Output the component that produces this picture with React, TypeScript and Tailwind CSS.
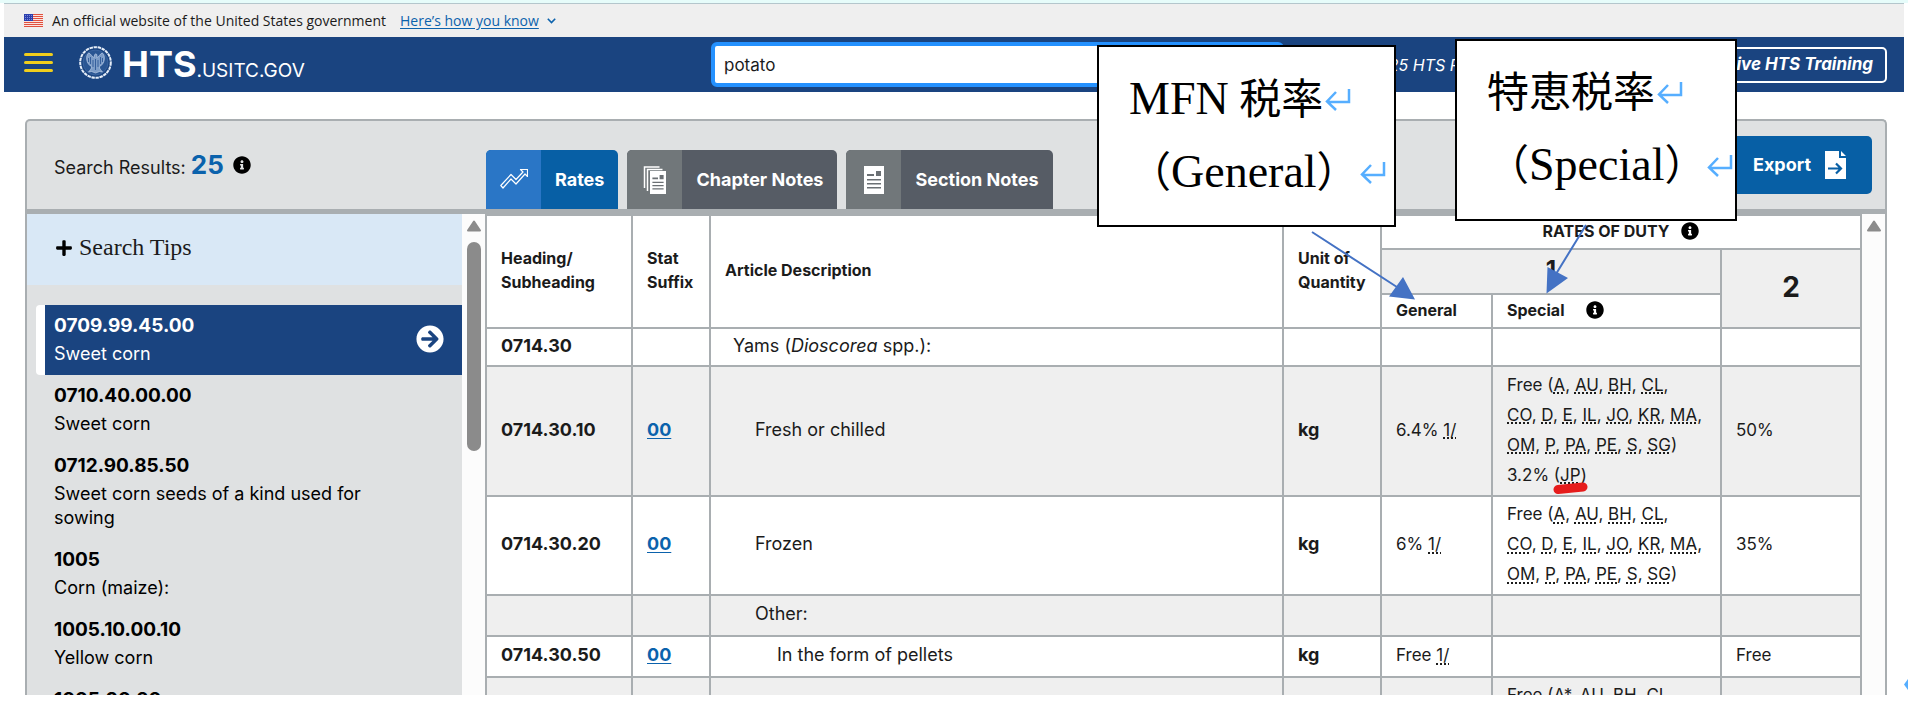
import type { ReactNode } from 'react';
import { FaArrowCircleRight, FaInfoCircle, FaPlus } from 'react-icons/fa';

interface SearchResult {
  code: string;
  description?: string;
}

interface RateRow {
  heading?: string;
  suffix?: string;
  description?: ReactNode;
  indent?: string;
  unit?: string;
  general?: string;
  note?: boolean;
  special?: ReactNode;
  column2?: string;
  height: string;
}

const results: SearchResult[] = [
  { code: '0709.99.45.00', description: 'Sweet corn' },
  { code: '0710.40.00.00', description: 'Sweet corn' },
  { code: '0712.90.85.50', description: 'Sweet corn seeds of a kind used for sowing' },
  { code: '1005', description: 'Corn (maize):' },
  { code: '1005.10.00.10', description: 'Yellow corn' },
  { code: '1005.90.20' },
];

const programLines = [
  ['A', 'AU', 'BH', 'CL'],
  ['CO', 'D', 'E', 'IL', 'JO', 'KR', 'MA'],
  ['OM', 'P', 'PA', 'PE', 'S', 'SG'],
];

function Abbr({ children }: { children: ReactNode }) {
  return (
    <abbr className="underline decoration-dotted decoration-2 underline-offset-2 [text-decoration-skip-ink:none]">
      {children}
    </abbr>
  );
}

function Programs({ lines, open = false }: { lines: string[][]; open?: boolean }) {
  return (
    <>
      {lines.map((line, i) => (
        <div key={i} className="whitespace-nowrap">
          {i === 0 && 'Free ('}
          {line.map((code, j) => (
            <span key={code}>
              <Abbr>{code}</Abbr>
              {!open && i === lines.length - 1 && j === line.length - 1 ? ')' : ', '}
            </span>
          ))}
        </div>
      ))}
    </>
  );
}

const rows: RateRow[] = [
  {
    heading: '0714.30',
    description: (
      <>
        Yams (<i>Dioscorea</i> spp.):
      </>
    ),
    indent: 'pl-[22px]',
    height: 'h-[38px]',
  },
  {
    heading: '0714.30.10',
    suffix: '00',
    description: 'Fresh or chilled',
    indent: 'pl-11',
    unit: 'kg',
    general: '6.4%',
    note: true,
    special: (
      <>
        <Programs lines={programLines} />
        <div>
          3.2% (
          <span className="relative">
            <Abbr>JP</Abbr>
            <svg className="absolute -left-2 top-[17px] h-3 w-9" viewBox="0 0 36 12" aria-hidden="true">
              <path d="M6 7.500 L31 5" stroke="#e61c1c" strokeWidth="9" strokeLinecap="round" />
            </svg>
          </span>
          )
        </div>
      </>
    ),
    column2: '50%',
    height: 'h-[130px]',
  },
  {
    heading: '0714.30.20',
    suffix: '00',
    description: 'Frozen',
    indent: 'pl-11',
    unit: 'kg',
    general: '6%',
    note: true,
    special: <Programs lines={programLines} />,
    column2: '35%',
    height: 'h-[99px]',
  },
  { description: 'Other:', indent: 'pl-11', height: 'h-[41px]' },
  {
    heading: '0714.30.50',
    suffix: '00',
    description: 'In the form of pellets',
    indent: 'pl-[66px]',
    unit: 'kg',
    general: 'Free',
    note: true,
    column2: 'Free',
    height: 'h-[41px]',
  },
  { special: <Programs open lines={[['A*', 'AU', 'BH', 'CL']]} />, height: 'h-[38px]' },
];

function Flag() {
  return (
    <svg className="h-[13px] w-[19px]" viewBox="0 0 19 13" aria-hidden="true">
      <rect width="19" height="13" fill="#fbe3df" />
      {[0, 2, 4, 6, 8, 10, 12].map(y => (
        <rect key={y} y={y} width="19" height="1" fill="#e0513f" />
      ))}
      <rect width="9" height="7" fill="#2a3fae" />
      {[1, 3, 5].map(y => (
        <path key={y} d={`M1 ${y + 0.5}h7`} stroke="#8f9ce0" strokeWidth="0.8" strokeDasharray="1 1" />
      ))}
    </svg>
  );
}

function Seal() {
  return (
    <svg className="h-[33px] w-[33px]" viewBox="0 0 33 33" fill="none" aria-hidden="true">
      <circle cx="16.5" cy="16.5" r="15.3" stroke="#e6eef8" strokeWidth="2" strokeDasharray="3.400 0.700" />
      <circle cx="16.5" cy="16.5" r="12.500" fill="#2a5693" stroke="#5079b2" strokeWidth="0.500" />
      <path
        d="M15.500 9c.5-1.500 2-1.500 2.500 0l-.3 2.500c2 0 3-3.500 5.500-4.500 2 1.500 2.500 4 2 7-.5 2.500-1.500 4-3 5.500l-2 1 .8 2.500 2.500 3-3-.5-4 1.500-4-1.500-3 .5 2.500-3 .8-2.500-2-1c-1.500-1.500-2.500-3-3-5.500-.5-3 0-5.500 2-7 2.500 1 3.500 4.500 5.500 4.500z"
        fill="#7d9dc8"
        stroke="#c9d9ee"
        strokeWidth="0.600"
      />
      <path
        d="M14 14v7M16.500 13v11M19 14v7M11.500 11v7M21.500 11v7M9.500 12v4M23.500 12v4"
        stroke="#2c5896"
        strokeWidth="0.900"
      />
    </svg>
  );
}

function TrendIcon() {
  return (
    <svg className="h-6 w-7" viewBox="0 0 28 24" fill="none" stroke="#fff" strokeWidth="1.200" aria-hidden="true">
      <path
        d="M3 20 .8 17.500 11 6.500 16 11.500 23 4 20.500 1.500H27.500V8.500L25 6 16 16 11 11z"
        strokeLinejoin="round"
      />
    </svg>
  );
}

function PageIcon({ stacked = false }: { stacked?: boolean }) {
  return (
    <svg className="h-7 w-6" viewBox="0 0 24 28" aria-hidden="true">
      {stacked && <path d="M1.500 22V1h15M4.500 25V3.500h15" fill="none" stroke="#fff" strokeWidth="1.500" />}
      <g transform={stacked ? 'translate(7 5) scale(.8 .82)' : 'translate(2 0)'}>
        <path d="M0 0h20v28H0z" fill="#fff" />
        <path d="M12 5h5v5h-5zM3 8h7v2H3zM3 13h14v1.500H3zM3 17h14v1.500H3zM3 21h14v1.500H3z" fill="#6b7074" />
      </g>
    </svg>
  );
}

function ReturnMark() {
  return (
    <svg className="h-[22px] w-[26px] shrink-0" viewBox="0 0 26 22" fill="none" stroke="#56aeff" strokeWidth="2.500" aria-hidden="true">
      <path d="M24 0v13H2M11 3 2 12.500 11 21" />
    </svg>
  );
}

function ScrollArrow() {
  return (
    <svg className="h-3 w-4" viewBox="0 0 16 12" aria-hidden="true">
      <path d="M8 1.500 14 10.500H2z" fill="#8b8b8b" stroke="#8b8b8b" strokeWidth="2" strokeLinejoin="round" />
    </svg>
  );
}

function Tab({ icon, label, active = false }: { icon: ReactNode; label: string; active?: boolean }) {
  return (
    <button
      role="tab"
      aria-selected={active}
      className={`flex h-[59px] items-stretch overflow-hidden rounded-t-[5px] text-lg font-bold text-white ${active ? 'bg-[#075fa5]' : 'bg-[#565c65]'}`}
    >
      <span className={`flex w-[55px] items-center justify-center ${active ? 'bg-[#2a76c6]' : 'bg-[#71777a]'}`}>{icon}</span>
      <span className="flex items-center px-[14px]">{label}</span>
    </button>
  );
}

function Callout({ title, term, place }: { title: ReactNode; term: string; place: string }) {
  return (
    <div
      className={`absolute h-[182px] border-2 border-black bg-white pl-[30px] pt-4 font-['Liberation_Serif','Noto_Sans_CJK_JP',serif] text-[42px] leading-[72px] text-black ${place}`}
    >
      <div className="flex items-center gap-[2px] whitespace-nowrap">
        <span>{title}</span>
        <ReturnMark />
      </div>
      <div className="flex items-center gap-px whitespace-nowrap">
        <span>
          （<span className="text-[46px]">{term}</span>）
        </span>
        <ReturnMark />
      </div>
    </div>
  );
}

function RatesTable() {
  const cell = 'border-2 border-[#a9aeb1] px-[14px] pb-[3px]';
  return (
    <table className="w-full table-fixed border-collapse bg-white text-left text-lg text-[#1b1b1b]">
      <colgroup>
        <col className="w-[146px]" />
        <col className="w-[78px]" />
        <col />
        <col className="w-[98px]" />
        <col className="w-[111px]" />
        <col className="w-[229px]" />
        <col className="w-[140px]" />
      </colgroup>
      <thead className="text-base leading-6 font-bold">
        <tr className="h-[34px]">
          <th rowSpan={3} className={cell}>
            Heading/
            <br />
            Subheading
          </th>
          <th rowSpan={3} className={cell}>
            Stat
            <br />
            Suffix
          </th>
          <th rowSpan={3} className={cell}>
            Article Description
          </th>
          <th rowSpan={3} className={cell}>
            Unit of
            <br />
            Quantity
          </th>
          <th colSpan={3} className={cell}>
            <span className="flex items-center justify-center gap-3">
              RATES OF DUTY <FaInfoCircle className="h-[18px] w-[18px] text-black" />
            </span>
          </th>
        </tr>
        <tr className="h-[45px]">
          <th colSpan={2} className={`${cell} bg-[#efefef] text-center text-2xl leading-6`}>
            1
          </th>
          <th rowSpan={2} className={`${cell} bg-[#efefef] text-center text-[28px]`}>
            2
          </th>
        </tr>
        <tr className="h-[34px]">
          <th className={cell}>General</th>
          <th className={cell}>
            <span className="flex items-center gap-[22px]">
              Special <FaInfoCircle className="h-[18px] w-[18px] text-black" />
            </span>
          </th>
        </tr>
      </thead>
      <tbody className="leading-[30px]">
        {rows.map((row, i) => (
          <tr key={i} className={`${row.height} ${i % 2 ? 'bg-[#efefef]' : 'bg-white'}`}>
            <td className={`${cell} font-bold`}>{row.heading}</td>
            <td className={`${cell} font-bold`}>
              {row.suffix && (
                <a href="#" className="text-[#0b62ac] underline underline-offset-2">
                  {row.suffix}
                </a>
              )}
            </td>
            <td className="border-2 border-[#a9aeb1] pb-[3px]">
              <div className={row.indent}>{row.description}</div>
            </td>
            <td className={`${cell} font-bold`}>{row.unit}</td>
            <td className={`${cell} text-[17px]`}>
              {row.general} {row.note && <Abbr>1/</Abbr>}
            </td>
            <td className={`${cell} text-[17px]`}>{row.special}</td>
            <td className={`${cell} text-[17px]`}>{row.column2}</td>
          </tr>
        ))}
      </tbody>
    </table>
  );
}

export default function App() {
  return (
    <div className="relative h-screen overflow-hidden bg-white pb-[7px] font-['Inter',sans-serif] text-[#1b1b1b]">
      <div className="flex h-full flex-col overflow-hidden">
        <div className="h-[3px] shrink-0 bg-[#e6fcfa]" />
        <div className="mx-1 flex h-[34px] shrink-0 items-center border-t border-[#b4c6cc] bg-[#efefef] pl-5 font-['Open_Sans',sans-serif] text-sm">
          <Flag />
          <span className="ml-[9px]">An official website of the United States government</span>
          <a href="#" className="ml-[14px] flex items-center gap-2 text-[#0b62ac]">
            <span className="underline underline-offset-2">Here’s how you know</span>
            <svg className="h-[6px] w-[9px]" viewBox="0 0 9 6" fill="none" stroke="currentColor" strokeWidth="1.600" aria-hidden="true">
              <path d="M.8.8 4.500 4.500 8.200.8" />
            </svg>
          </a>
        </div>

        <header className="mx-1 flex h-[55px] shrink-0 items-center bg-[#1a4480] pr-[17px] pl-5 text-white">
          <button aria-label="Menu" className="flex w-[29px] flex-col gap-[5px] pb-1">
            <span className="h-[3px] w-full rounded-sm bg-[#f0ce1c]" />
            <span className="h-[3px] w-full rounded-sm bg-[#f0ce1c]" />
            <span className="h-[3px] w-full rounded-sm bg-[#f0ce1c]" />
          </button>
          <a href="#" className="ml-[26px] flex items-center gap-[10px]">
            <span className="pb-1">
              <Seal />
            </span>
            <span className="whitespace-nowrap text-[19px]">
              <b className="text-4xl">HTS</b>.USITC.GOV
            </span>
          </a>
          <input
            aria-label="Search"
            defaultValue="potato"
            className="ml-auto h-[45px] w-[573px] rounded-md border-4 border-[#2491ff] bg-white px-[9px] text-[17px] text-[#1b1b1b] outline-none"
          />
          <span className="ml-[85px] w-[278px] shrink-0 text-base whitespace-nowrap italic">2025 HTS Revision</span>
          <a href="#" className="flex h-9 w-[240px] shrink-0 items-center justify-end rounded-[5px] border-2 border-white pr-3 text-[17px] font-bold whitespace-nowrap italic">
            Interactive HTS Training
          </a>
        </header>

        <main className="mr-[21px] ml-[25px] mt-[27px] flex min-h-0 flex-1 flex-col rounded-t-[5px] border-2 border-b-0 border-[#a9aeb1] bg-[#dfe1e2]">
          <div className="flex h-[93px] shrink-0 border-b-[5px] border-[#a9aeb1]">
            <div className="flex w-[459px] shrink-0 items-center gap-[9px] pl-[27px] text-lg">
              <span className="whitespace-nowrap">
                Search Results: <b className="text-[26px] text-[#0b62ac]">25</b>
              </span>
              <FaInfoCircle className="h-[18px] w-[18px] text-black" />
            </div>
            <div role="tablist" className="flex items-end gap-[9px]">
              <Tab active icon={<TrendIcon />} label="Rates" />
              <Tab icon={<PageIcon stacked />} label="Chapter Notes" />
              <Tab icon={<PageIcon />} label="Section Notes" />
            </div>
            <button className="mt-[15px] mr-[13px] ml-auto flex h-[58px] w-[150px] items-center justify-end gap-[14px] rounded-[5px] bg-[#075fa5] pr-[26px] text-lg font-bold text-white">
              Export
              <svg className="h-7 w-[21px]" viewBox="0 0 21 28" aria-hidden="true">
                <path d="M0 0h14v7h7v21H0zM16 0v5h5z" fill="#fff" />
                <path d="M3 17.500h12M11 12.500l5 5-5 5" fill="none" stroke="#075fa5" strokeWidth="2.200" />
              </svg>
            </button>
          </div>

          <div className="flex min-h-0 flex-1">
            <aside className="w-[435px] shrink-0 overflow-hidden">
              <button className="flex h-[71px] w-full items-start gap-[6px] bg-[#d9e8f6] pt-[17px] pl-7 font-['Liberation_Serif',serif] text-2xl leading-8">
                <FaPlus className="mt-2 h-[18px] w-[18px] text-black" />
                Search Tips
              </button>
              <ul className="mt-5 ml-[9px] text-black">
                {results.map((result, i) => (
                  <li
                    key={result.code}
                    className={
                      i === 0
                        ? 'flex items-center rounded-l-[4px] border-l-[9px] border-white bg-[#1a4480] pt-[7px] pr-[18px] pb-[9px] pl-[9px] text-white'
                        : 'pt-[7px] pr-[70px] pb-[9px] pl-[18px]'
                    }
                  >
                    <div className="flex-1">
                      <div className="text-[19px] leading-[27px] font-bold">{result.code}</div>
                      <div className="mt-[3px] text-lg leading-6">{result.description}</div>
                    </div>
                    {i === 0 && <FaArrowCircleRight className="h-7 w-7" />}
                  </li>
                ))}
              </ul>
            </aside>
            <div className="flex w-[23px] shrink-0 flex-col items-center gap-[10px] bg-[#fcfcfc] pt-[6px]">
              <ScrollArrow />
              <div className="h-[209px] w-[14px] rounded-full bg-[#8b8b8b]" />
            </div>
            <div className="min-w-0 flex-1 overflow-hidden">
              <RatesTable />
            </div>
            <div className="flex w-[23px] shrink-0 flex-col items-center bg-[#fcfcfc] pt-[6px]">
              <ScrollArrow />
            </div>
          </div>
        </main>
      </div>

      <Callout title={<><span className="text-[46px]">MFN</span> 税率</>} term="General" place="top-[45px] right-[512px] w-[299px]" />
      <Callout title="特恵税率" term="Special" place="top-[39px] right-[171px] w-[282px]" />
      <svg className="pointer-events-none absolute top-[220px] right-[308px] h-[90px] w-[300px]" viewBox="1300 220 300 90" aria-hidden="true">
        <path d="M1312 232 1400 289M1586 225 1556 274" stroke="#4472c4" strokeWidth="2" />
        <path d="M1403 277 1389 296.500 1415 299.500zM1568 278 1547.500 267 1546.500 293.500z" fill="#4472c4" />
      </svg>
      <svg className="absolute right-0 bottom-3 h-[11px] w-1" viewBox="0 0 4 11" aria-hidden="true">
        <path d="M4 0v11L0 5.500z" fill="#56aeff" />
      </svg>
    </div>
  );
}
